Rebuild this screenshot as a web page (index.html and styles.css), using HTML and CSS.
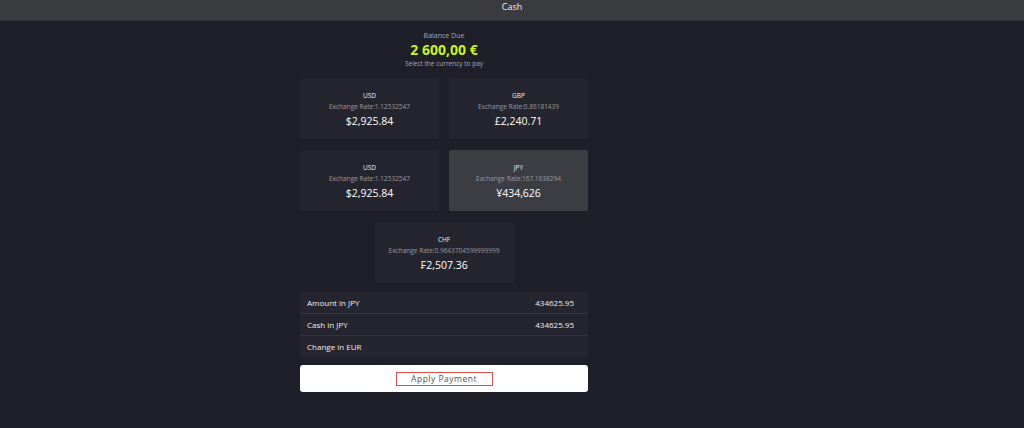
FILE: index.html
```html
<!DOCTYPE html>
<html>

<head>
    <meta charset="UTF-8" />
    <meta name="viewport" content="width=device-width, initial-scale=1" />
    <link rel="stylesheet" href="styles.css">
</head>

<body>
    <header class="topbar">Cash</header>
    <section class="pay">
        <div class="due">
            <div class="due-label">Balance Due</div>
            <div class="due-amount">2 600,00 €</div>
            <div class="due-hint">Select the currency to pay</div>
        </div>
        <div class="currencies">
            <div class="currency">
                <div class="code">USD</div>
                <div class="rate">Exchange Rate:1.12532547</div>
                <div class="value">$2,925.84</div>
            </div>
            <div class="currency">
                <div class="code">GBP</div>
                <div class="rate">Exchange Rate:0.86181439</div>
                <div class="value">£2,240.71</div>
            </div>
            <div class="currency">
                <div class="code">USD</div>
                <div class="rate">Exchange Rate:1.12532547</div>
                <div class="value">$2,925.84</div>
            </div>
            <div class="currency active">
                <div class="code">JPY</div>
                <div class="rate">Exchange Rate:167.1638294</div>
                <div class="value">¥434,626</div>
            </div>
            <div class="currency last">
                <div class="code">CHF</div>
                <div class="rate">Exchange Rate:0.9643704599999999</div>
                <div class="value">₣2,507.36</div>
            </div>
        </div>
        <div class="summary">
            <div class="row"><span>Amount in JPY</span><span>434625.95</span></div>
            <div class="row"><span>Cash in JPY</span><span>434625.95</span></div>
            <div class="row"><span>Change in EUR</span><span></span></div>
        </div>
        <button class="apply"><span>Apply Payment</span></button>
    </section>
</body>

</html>
```

FILE: styles.css
```css
body {
    margin: 0;
    padding: 0;
    height: 100vh;
    background-color: #1f1f29;
    color: #fff;
    font-family: "Open Sans", "Noto Sans", sans-serif;
}

.topbar {
    height: 21px;
    line-height: 13px;
    text-align: center;
    font-size: 9px;
    color: #f0f0f0;
    background-color: #3a3b3f;
    border-bottom: 1px solid #303136;
    box-sizing: border-box;
}

.pay {
    width: 288px;
    margin: 0 auto;
    padding-top: 10px;
    position: relative;
    left: -68px;
}

.due {
    text-align: center;
}

.due-label {
    font-size: 7px;
    line-height: 9px;
    color: #a8a8b0;
}

.due-amount {
    font-size: 14px;
    font-weight: 700;
    line-height: 19px;
    color: #c8f220;
}

.due-hint {
    font-size: 6.5px;
    line-height: 10px;
    color: #a8a8b0;
}

.currencies {
    display: flex;
    flex-wrap: wrap;
    justify-content: center;
    gap: 11px 10px;
    margin-top: 9px;
}

.currency {
    width: 139px;
    height: 61px;
    box-sizing: border-box;
    padding-top: 13px;
    background-color: #25252f;
    border-radius: 2px;
    text-align: center;
}

.currency.active {
    background-color: #3c3d42;
}

.code {
    font-size: 6.5px;
    line-height: 10px;
    color: #f0f0f0;
}

.rate {
    font-size: 6.5px;
    line-height: 12px;
    color: #9a9aa2;
}

.value {
    font-size: 10.5px;
    line-height: 16px;
    color: #fff;
}

.summary {
    margin-top: 9px;
    background-color: #25252f;
}

.row {
    display: flex;
    justify-content: space-between;
    height: 21px;
    line-height: 21px;
    padding: 0 14px 0 7px;
    font-size: 8px;
    color: #f0f0f0;
    border-bottom: 1px solid #35353f;
}

.row:last-child {
    border-bottom: none;
}

.apply {
    display: flex;
    align-items: center;
    justify-content: center;
    width: 100%;
    height: 27px;
    margin-top: 8px;
    background-color: #fff;
    border: none;
    border-radius: 3px;
    padding: 0;
    font-family: "Open Sans", "Noto Sans", sans-serif;
}

.apply span {
    display: block;
    width: 95px;
    height: 12px;
    line-height: 12px;
    border: 1px solid #e44a4a;
    font-size: 8.5px;
    letter-spacing: 0.5px;
    color: #555;
}
```
